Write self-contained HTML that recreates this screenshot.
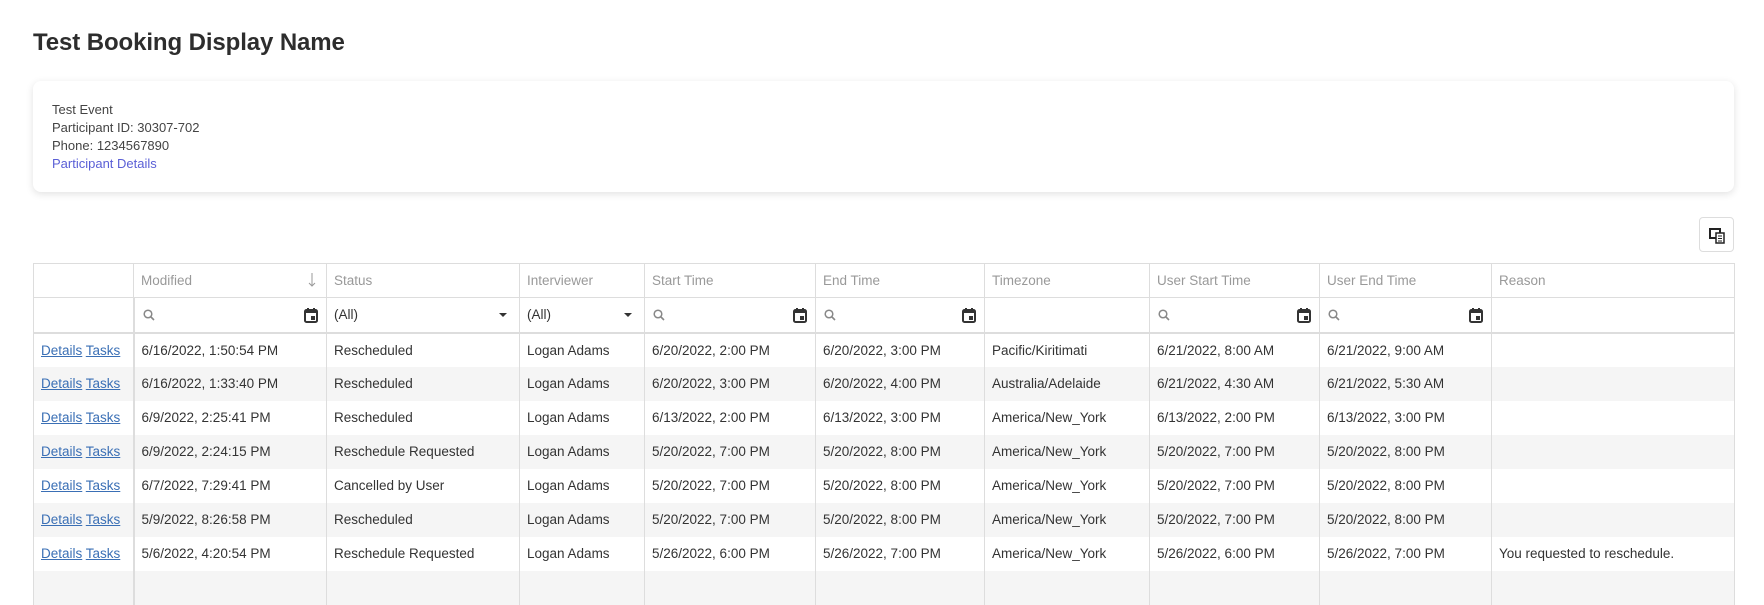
<!DOCTYPE html>
<html><head><meta charset="utf-8"><style>
*{box-sizing:border-box;margin:0;padding:0}
body{width:1764px;height:580px;overflow:hidden;background:#fff;font-family:"Liberation Sans",sans-serif;color:#333}
h1{position:absolute;left:33px;top:29px;font-size:24px;font-weight:bold;color:#2d2d2d;letter-spacing:-0.1px}
.card{position:absolute;left:33px;top:81px;width:1701px;height:111px;border-radius:8px;box-shadow:0 2px 8px rgba(0,0,0,0.12);background:#fff}
.card div{position:absolute;left:19px;font-size:13px;color:#444}
.card a{color:#5a5fd6;text-decoration:none}
.btn{position:absolute;left:1699px;top:217px;width:35px;height:35px;border:1px solid #ddd;border-radius:4px;background:#fff}
table{position:absolute;left:33px;top:263px;border-collapse:collapse;table-layout:fixed;width:1701px;font-size:13.5px}
td,th{border-left:1px solid #ddd;border-right:1px solid #ddd;padding:0 7px;white-space:nowrap;overflow:hidden;text-align:left;font-weight:normal;height:34px;color:#333}
th{color:#999;border-top:1px solid #ddd;border-bottom:1px solid #ddd;position:relative}
tr.f td{border-bottom:2px solid #ddd;height:35px;position:relative}
td.c0{border-right:2px solid #ddd}
tr.g td{background:#f5f5f5}
a.l{color:#3a6fb5;text-decoration:underline}
.s{position:absolute;left:8px;top:11px}
.cal{position:absolute;right:8px;top:9px}
.dd{position:absolute;right:12px;top:15px;width:0;height:0;border-left:4px solid transparent;border-right:4px solid transparent;border-top:4px solid #333}
</style></head><body>
<h1>Test Booking Display Name</h1>
<div class="card">
<div style="top:21px">Test Event</div>
<div style="top:39px">Participant ID: 30307-702</div>
<div style="top:57px">Phone: 1234567890</div>
<div style="top:75px"><a>Participant Details</a></div>
</div>
<div class="btn"><svg width="35" height="35" viewBox="0 0 35 35"><rect x="10" y="11" width="10" height="9" fill="none" stroke="#222" stroke-width="2"/><rect x="16" y="15" width="8" height="10" fill="#fff" stroke="#222" stroke-width="1.5"/><path d="M18 18h4M18 20.5h4M18 23h4" stroke="#222" stroke-width="1"/></svg></div>
<table>
<colgroup><col style="width:100px"><col style="width:193px"><col style="width:193px"><col style="width:125px"><col style="width:171px"><col style="width:169px"><col style="width:165px"><col style="width:170px"><col style="width:172px"><col style="width:243px"></colgroup>
<tr><th></th><th>Modified<svg style="position:absolute;right:10px;top:8px" width="8" height="16"><path d="M4 1v13M1 11l3 3 3-3" stroke="#999" fill="none"/></svg></th><th>Status</th><th>Interviewer</th><th>Start Time</th><th>End Time</th><th>Timezone</th><th>User Start Time</th><th>User End Time</th><th>Reason</th></tr>
<tr class="f"><td class="c0"></td>
<td><svg class="s" width="12" height="12"><circle cx="5" cy="5" r="3.8" stroke="#888" stroke-width="1.5" fill="none"/><path d="M8 8l3 3" stroke="#888" stroke-width="1.6"/></svg><svg class="cal" width="14" height="16"><rect x="1" y="3" width="12" height="12" rx="1.5" fill="none" stroke="#333" stroke-width="2"/><rect x="1" y="3" width="12" height="3" fill="#333"/><rect x="3" y="1" width="2" height="3" fill="#333"/><rect x="9" y="1" width="2" height="3" fill="#333"/><rect x="7" y="9" width="4" height="4" fill="#333"/></svg></td>
<td>(All)<span class="dd"></span></td><td>(All)<span class="dd"></span></td>
<td><svg class="s" width="12" height="12"><circle cx="5" cy="5" r="3.8" stroke="#888" stroke-width="1.5" fill="none"/><path d="M8 8l3 3" stroke="#888" stroke-width="1.6"/></svg><svg class="cal" width="14" height="16"><rect x="1" y="3" width="12" height="12" rx="1.5" fill="none" stroke="#333" stroke-width="2"/><rect x="1" y="3" width="12" height="3" fill="#333"/><rect x="3" y="1" width="2" height="3" fill="#333"/><rect x="9" y="1" width="2" height="3" fill="#333"/><rect x="7" y="9" width="4" height="4" fill="#333"/></svg></td>
<td><svg class="s" width="12" height="12"><circle cx="5" cy="5" r="3.8" stroke="#888" stroke-width="1.5" fill="none"/><path d="M8 8l3 3" stroke="#888" stroke-width="1.6"/></svg><svg class="cal" width="14" height="16"><rect x="1" y="3" width="12" height="12" rx="1.5" fill="none" stroke="#333" stroke-width="2"/><rect x="1" y="3" width="12" height="3" fill="#333"/><rect x="3" y="1" width="2" height="3" fill="#333"/><rect x="9" y="1" width="2" height="3" fill="#333"/><rect x="7" y="9" width="4" height="4" fill="#333"/></svg></td>
<td></td>
<td><svg class="s" width="12" height="12"><circle cx="5" cy="5" r="3.8" stroke="#888" stroke-width="1.5" fill="none"/><path d="M8 8l3 3" stroke="#888" stroke-width="1.6"/></svg><svg class="cal" width="14" height="16"><rect x="1" y="3" width="12" height="12" rx="1.5" fill="none" stroke="#333" stroke-width="2"/><rect x="1" y="3" width="12" height="3" fill="#333"/><rect x="3" y="1" width="2" height="3" fill="#333"/><rect x="9" y="1" width="2" height="3" fill="#333"/><rect x="7" y="9" width="4" height="4" fill="#333"/></svg></td>
<td><svg class="s" width="12" height="12"><circle cx="5" cy="5" r="3.8" stroke="#888" stroke-width="1.5" fill="none"/><path d="M8 8l3 3" stroke="#888" stroke-width="1.6"/></svg><svg class="cal" width="14" height="16"><rect x="1" y="3" width="12" height="12" rx="1.5" fill="none" stroke="#333" stroke-width="2"/><rect x="1" y="3" width="12" height="3" fill="#333"/><rect x="3" y="1" width="2" height="3" fill="#333"/><rect x="9" y="1" width="2" height="3" fill="#333"/><rect x="7" y="9" width="4" height="4" fill="#333"/></svg></td>
<td></td></tr>
<tr><td class="c0"><a class="l">Details</a> <a class="l">Tasks</a></td><td>6/16/2022, 1:50:54 PM</td><td>Rescheduled</td><td>Logan Adams</td><td>6/20/2022, 2:00 PM</td><td>6/20/2022, 3:00 PM</td><td>Pacific/Kiritimati</td><td>6/21/2022, 8:00 AM</td><td>6/21/2022, 9:00 AM</td><td></td></tr>
<tr class="g"><td class="c0"><a class="l">Details</a> <a class="l">Tasks</a></td><td>6/16/2022, 1:33:40 PM</td><td>Rescheduled</td><td>Logan Adams</td><td>6/20/2022, 3:00 PM</td><td>6/20/2022, 4:00 PM</td><td>Australia/Adelaide</td><td>6/21/2022, 4:30 AM</td><td>6/21/2022, 5:30 AM</td><td></td></tr>
<tr><td class="c0"><a class="l">Details</a> <a class="l">Tasks</a></td><td>6/9/2022, 2:25:41 PM</td><td>Rescheduled</td><td>Logan Adams</td><td>6/13/2022, 2:00 PM</td><td>6/13/2022, 3:00 PM</td><td>America/New_York</td><td>6/13/2022, 2:00 PM</td><td>6/13/2022, 3:00 PM</td><td></td></tr>
<tr class="g"><td class="c0"><a class="l">Details</a> <a class="l">Tasks</a></td><td>6/9/2022, 2:24:15 PM</td><td>Reschedule Requested</td><td>Logan Adams</td><td>5/20/2022, 7:00 PM</td><td>5/20/2022, 8:00 PM</td><td>America/New_York</td><td>5/20/2022, 7:00 PM</td><td>5/20/2022, 8:00 PM</td><td></td></tr>
<tr><td class="c0"><a class="l">Details</a> <a class="l">Tasks</a></td><td>6/7/2022, 7:29:41 PM</td><td>Cancelled by User</td><td>Logan Adams</td><td>5/20/2022, 7:00 PM</td><td>5/20/2022, 8:00 PM</td><td>America/New_York</td><td>5/20/2022, 7:00 PM</td><td>5/20/2022, 8:00 PM</td><td></td></tr>
<tr class="g"><td class="c0"><a class="l">Details</a> <a class="l">Tasks</a></td><td>5/9/2022, 8:26:58 PM</td><td>Rescheduled</td><td>Logan Adams</td><td>5/20/2022, 7:00 PM</td><td>5/20/2022, 8:00 PM</td><td>America/New_York</td><td>5/20/2022, 7:00 PM</td><td>5/20/2022, 8:00 PM</td><td></td></tr>
<tr><td class="c0"><a class="l">Details</a> <a class="l">Tasks</a></td><td>5/6/2022, 4:20:54 PM</td><td>Reschedule Requested</td><td>Logan Adams</td><td>5/26/2022, 6:00 PM</td><td>5/26/2022, 7:00 PM</td><td>America/New_York</td><td>5/26/2022, 6:00 PM</td><td>5/26/2022, 7:00 PM</td><td>You requested to reschedule.</td></tr>
<tr class="g"><td class="c0"></td><td></td><td></td><td></td><td></td><td></td><td></td><td></td><td></td><td></td></tr>
</table>
</body></html>
